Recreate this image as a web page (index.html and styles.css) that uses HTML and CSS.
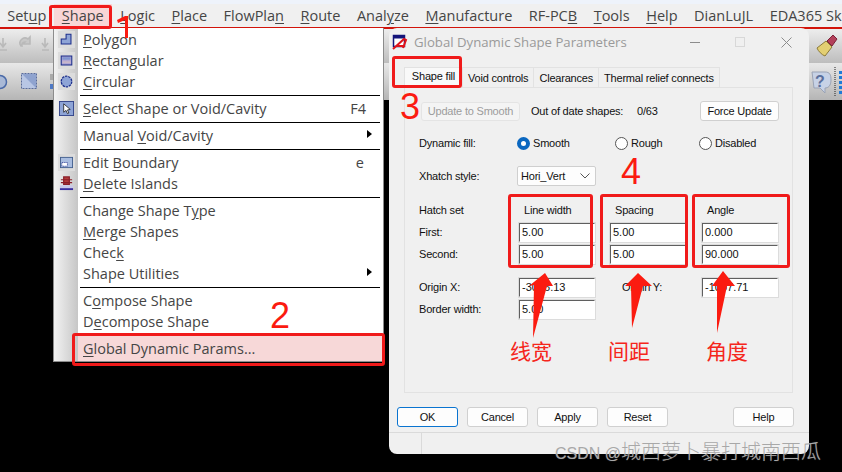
FILE: index.html
```html
<!DOCTYPE html>
<html lang="en">
<head>
<meta charset="utf-8">
<title>Global Dynamic Shape Parameters</title>
<link rel="stylesheet" href="styles.css">
</head>
<body>
<div class="screen">
  <div class="app">
    <div class="strip"></div>
    <nav class="menubar">
      <span class="mi"><span>Set<u>u</u>p</span></span>
      <span class="mi active"><span><u>S</u>hape</span></span>
      <span class="mi"><span><u>L</u>ogic</span></span>
      <span class="mi"><span><u>P</u>lace</span></span>
      <span class="mi"><span>FlowPla<u>n</u></span></span>
      <span class="mi"><span><u>R</u>oute</span></span>
      <span class="mi"><span>Anal<u>y</u>ze</span></span>
      <span class="mi"><span><u>M</u>anufacture</span></span>
      <span class="mi"><span>RF-PC<u>B</u></span></span>
      <span class="mi"><span><u>T</u>ools</span></span>
      <span class="mi"><span><u>H</u>elp</span></span>
      <span class="mi"><span>DianLuJL</span></span>
      <span class="mi"><span>EDA365 Sk</span></span>
    </nav>
    <div class="toolbar t1">
      <svg class="tool" width="54" height="34" viewBox="0 0 54 34">
        <g fill="none" stroke="#b9b9b9" stroke-width="1.6">
          <path d="M3 9v9M0 14l3 4 3-4M0 21h7"/>
          <path d="M45 9v9M42 14l3 4 3-4M42 21h7"/>
          <path d="M21 17a5 5 0 0 1 7-7l2-2v7h-7l2-2a3 3 0 0 0-3 4z" fill="#c8c8c8"/>
        </g>
      </svg>
    </div>
    <div class="toolbar t2">
      <svg class="tool" width="54" height="37" viewBox="0 0 54 37">
        <circle cx="0" cy="19" r="6.500" fill="#a9b9d6" stroke="#4a6aa8" stroke-width="1.500"/>
        <path d="M21.500 10.500h15v15h-15z" fill="#b8c6e4" stroke="#5a6c9a" stroke-dasharray="2 1"/>
        <path d="M22 11l14 14v-14z" fill="#8fa3cf"/>
        <rect x="50" y="11" width="4" height="6" fill="#aaa"/>
        <rect x="50" y="21" width="4" height="5" fill="#4f79c4"/>
      </svg>
      <svg class="tool-right" width="33" height="37" viewBox="0 0 33 37">
        <path d="M3 9h13c5 0 6 3 6 8 0 6-3 8-6 8v5l-5-5H5z" fill="#c7d2e6" stroke="#9aa3b5"/>
        <text class="help-q" x="6" y="24">?</text>
        <path d="M26 4v30" stroke="#222" stroke-width="1" stroke-dasharray="1 1"/>
        <g fill="#1f7ad8"><rect x="30" y="8" width="3" height="3"/><rect x="30" y="13" width="3" height="3"/><rect x="30" y="18" width="3" height="3"/><rect x="30" y="23" width="3" height="3"/><rect x="30" y="28" width="3" height="3"/></g>
      </svg>
    </div>
  </div>

  <div class="menu">
    <div class="item">
      <span class="ico"><svg class="gi" viewBox="0 0 16 16"><path d="M7.500 1.500h6v12h-12v-6h6z" fill="#8ea4d6" stroke="#1c2f8c" stroke-width="1.300"/></svg></span>
      <span class="lbl"><u>P</u>olygon</span>
    </div>
    <div class="item">
      <span class="ico"><svg class="gi" viewBox="0 0 16 16"><rect x="1.500" y="2.500" width="13" height="11" fill="#b0a6d4" stroke="#1c2f8c" stroke-width="1.300"/><rect x="3" y="4" width="10" height="3" fill="#7f95d0"/><rect x="3" y="9" width="10" height="2" fill="#c9b8c8"/></svg></span>
      <span class="lbl"><u>R</u>ectangular</span>
    </div>
    <div class="item">
      <span class="ico"><svg class="gi" viewBox="0 0 16 16"><circle cx="8" cy="8" r="6.500" fill="#8ea4d6" stroke="#1c2f8c" stroke-width="1.600" stroke-dasharray="3 1"/></svg></span>
      <span class="lbl"><u>C</u>ircular</span>
    </div>
    <div class="sep"></div>
    <div class="item">
      <span class="ico"><svg class="gl" viewBox="0 0 16 16"><rect x="0.500" y="0.500" width="15" height="15" fill="#8ea4d6" stroke="#34458a"/><path d="M5 3v9l2.500-2 1.500 3.500 1.500-.7L9 9.500l3-.5z" fill="#fff" stroke="#111" stroke-width=".8"/></svg></span>
      <span class="lbl"><u>S</u>elect Shape or Void/Cavity</span>
      <span class="key">F4</span>
    </div>
    <div class="sep"></div>
    <div class="item">
      <span class="ico"></span>
      <span class="lbl">Manual <u>V</u>oid/Cavity</span>
      <span class="arrow"></span>
    </div>
    <div class="sep"></div>
    <div class="item">
      <span class="ico"><svg class="gi" viewBox="0 0 14 14"><rect x="0.500" y="1.500" width="13" height="11" fill="#a9bde0" stroke="#44608f"/><rect x="2" y="7" width="6" height="4" fill="#fff" stroke="#1c2f8c" stroke-dasharray="1 1"/></svg></span>
      <span class="lbl">Edit <u>B</u>oundary</span>
      <span class="key key-e">e</span>
    </div>
    <div class="item">
      <span class="ico"><svg class="gl" viewBox="0 0 16 16"><path d="M5 1h6v8H5zM2 4h12M2 7h12" fill="#b33a3a" stroke="#8a1f2a" stroke-width="1.300"/><rect x="1" y="10" width="14" height="3" fill="#c8c8ea"/><rect x="1" y="13" width="14" height="2" fill="#3a2ea0"/></svg></span>
      <span class="lbl"><u>D</u>elete Islands</span>
    </div>
    <div class="sep"></div>
    <div class="item"><span class="ico"></span><span class="lbl">Change Shape T<u>y</u>pe</span></div>
    <div class="item"><span class="ico"></span><span class="lbl"><u>M</u>erge Shapes</span></div>
    <div class="item"><span class="ico"></span><span class="lbl">Chec<u>k</u></span></div>
    <div class="item">
      <span class="ico"></span>
      <span class="lbl">Shape Utilities</span>
      <span class="arrow"></span>
    </div>
    <div class="sep"></div>
    <div class="item"><span class="ico"></span><span class="lbl">C<u>o</u>mpose Shape</span></div>
    <div class="item"><span class="ico"></span><span class="lbl">D<u>e</u>compose Shape</span></div>
    <div class="sep sep-last"></div>
    <div class="item hot"><span class="ico"></span><span class="lbl"><u>G</u>lobal Dynamic Params...</span></div>
  </div>

  <section class="dialog">
    <header class="titlebar">
      <svg class="appicon" width="16" height="16" viewBox="0 0 16 16">
        <rect x="1.500" y="1.500" width="11" height="11" fill="#fff" stroke="#14147a" stroke-width="1.500"/>
        <rect x="1.500" y="1.500" width="11" height="3" fill="#14147a"/>
        <path d="M1 15L12 5l2 1-3 8M5 12h8" fill="none" stroke="#e0141c" stroke-width="2"/>
      </svg>
      <span class="title">Global Dynamic Shape Parameters</span>
      <span class="winbtns">
        <span class="wb-min"></span>
        <span class="wb-max"></span>
        <svg class="wb-close" width="11" height="11" viewBox="0 0 11 11"><path d="M.5.500l10 10M10.500.500l-10 10" stroke="#8c8c8c" stroke-width="1"/></svg>
      </span>
    </header>
    <div class="tabs">
      <span class="tab on">Shape fill</span>
      <span class="tab">Void controls</span>
      <span class="tab">Clearances</span>
      <span class="tab">Thermal relief connects</span>
    </div>
    <div class="panel">
      <div class="toprow">
        <span class="btn ghost">Update to Smooth</span>
        <span class="ood">Out of date shapes:</span>
        <span class="cnt">0/63</span>
        <span class="btn force">Force Update</span>
      </div>
      <div class="row fillrow">
        <span>Dynamic fill:</span>
        <span class="radios">
          <span class="radio r1"><i class="dot sel"></i>Smooth</span>
          <span class="radio r2"><i class="dot"></i>Rough</span>
          <span class="radio"><i class="dot"></i>Disabled</span>
        </span>
      </div>
      <div class="row xrow">
        <span>Xhatch style:</span>
        <span class="select">Hori_Vert<svg width="10" height="6" viewBox="0 0 10 6"><path d="M.5.500L5 5 9.500.500" fill="none" stroke="#555"/></svg></span>
      </div>
      <div class="grid hatch">
        <span>Hatch set</span><span class="h-col">Line width</span><span class="h-col">Spacing</span><span class="h-col">Angle</span>
      </div>
      <div class="grid first">
        <span>First:</span><span class="input">5.00</span><span class="input">5.00</span><span class="input">0.000</span>
      </div>
      <div class="grid second">
        <span>Second:</span><span class="input">5.00</span><span class="input">5.00</span><span class="input">90.000</span>
      </div>
      <div class="grid origin">
        <span>Origin X:</span><span class="input">-3006.13</span><span class="oy">Origin Y:</span><span class="input">-1007.71</span>
      </div>
      <div class="grid border">
        <span>Border width:</span><span class="input">5.00</span>
      </div>
    </div>
    <div class="actions">
      <span class="btn act ok">OK</span>
      <span class="btn act">Cancel</span>
      <span class="btn act">Apply</span>
      <span class="btn act">Reset</span>
      <span class="btn act help">Help</span>
    </div>
    <footer class="status"><span class="pane"></span></footer>
  </section>

  <span class="box b-shape"></span>
  <span class="box b-global"></span>
  <span class="box b-tab"></span>
  <span class="box b-lw"></span>
  <span class="box b-sp"></span>
  <span class="box b-an"></span>

  <svg class="marks" width="842" height="472" viewBox="0 0 842 472">
    <g fill="#fb1b10">
      <path d="M117 20l8-4h3v22h-3V20l-7 3z"/>
      <path d="M545 273l8 13-6 0-14 52 1-53-5 1z"/>
      <path d="M638 273l14 13-9 0-11 42-1-42-6 0z"/>
      <path d="M723 271l12 15-8 0-10 47 0-47-5 0z"/>
    </g>
  </svg>
  <span class="num n2">2</span>
  <span class="num n3">3</span>
  <span class="num n4">4</span>
  <span class="cn c1">线宽</span>
  <span class="cn c2">间距</span>
  <span class="cn c3">角度</span>
  <svg class="broom" width="26" height="26" viewBox="0 0 26 26">
    <path d="M3 15l9-7 6 6-7 9c-3-1-7-5-8-8z" fill="#e3cf72" stroke="#8b7a3a"/>
    <path d="M13 8l6-6 4 4-5 7z" fill="#b3405a" stroke="#7c2238"/>
  </svg>
  <span class="watermark">CSDN @<span class="wm-cn">城西萝卜暴打城南西瓜</span></span>
</div>
</body>
</html>
```

FILE: styles.css
```css
* { box-sizing: border-box; }
html, body { margin: 0; padding: 0; background: #000; }
.screen { position: relative; width: 842px; height: 472px; overflow: hidden; background: #000; font-family: "Liberation Sans", Arial, sans-serif; }
u { text-underline-offset: 2px; text-decoration-thickness: 1px; }

.app { display: flex; flex-direction: column; }
.strip { height: 4px; background: #eef3fb; }
.menubar { height: 23px; background: #f0f0f0; display: flex; font: 14.5px/23px "Open Sans", sans-serif; color: #454545; white-space: nowrap; }
.mi { padding: 0 8.25px; }
.menubar .mi:first-child { margin-left: -1px; margin-right: -1px; }
.mi.active { background: #f8d6d6; }
.toolbar { position: relative; }
.t1 { height: 36px; border-top: 2px solid #d2140a; background: linear-gradient(#ededed, #bdbdbd); }
.t2 { height: 37px; background: linear-gradient(#e8e8e8, #b5b5b5); }
.tool { display: block; }
.tool-right { position: absolute; right: 0; top: 0; }
.help-q { font: bold 16px "Liberation Sans", sans-serif; fill: #5a6f9c; }

.menu { position: absolute; left: 53px; top: 28px; width: 331px; height: 334px; padding: 1px 0 0; background: #fff; border: 1px solid #8c8c8c; border-top: 0; display: flex; flex-direction: column; font: 14.5px/21px "Open Sans", sans-serif; color: #454545; }
.menu::before { content: ""; position: absolute; left: 0; top: 0; bottom: 0; width: 24px; background: linear-gradient(90deg, #f2f2f2, #c6c6c6); }
.item { position: relative; height: 21px; display: flex; align-items: center; white-space: nowrap; padding-right: 14px; }
.ico { width: 29px; flex: none; display: flex; align-items: center; padding-left: 4px; }
.gi { width: 17px; height: 17px; padding: 2px; background: #dcdcdc; display: block; }
.gl { width: 15px; height: 15px; margin-left: 1px; display: block; }
.lbl { flex: 1; }
.key { margin-right: 3px; }
.key-e { margin-right: 5px; }
.arrow { width: 0; height: 0; margin-right: -3px; border-left: 5px solid #000; border-top: 4px solid transparent; border-bottom: 4px solid transparent; margin-top: -4px; }
.sep { position: relative; height: 6px; margin: 0 3px 0 26px; display: flex; align-items: center; flex: none; }
.sep::after { content: ""; display: block; height: 1px; width: 100%; background: #000; }
.sep-last { height: 4px; }
.hot { height: 27px; margin: 0 0 0 24px; background: #f7d8d8; }
.hot .ico { width: 5px; padding: 0; }

.dialog { position: absolute; left: 389px; top: 28px; width: 420px; height: 426px; background: #f0f0f0; border-radius: 8px; display: flex; flex-direction: column; font-size: 11px; letter-spacing: -.2px; color: #111; }
.titlebar { height: 28px; display: flex; align-items: center; padding: 0 17px 0 3px; flex: none; }
.appicon { margin-right: 6px; flex: none; }
.title { flex: 1; font: 13.2px "Open Sans", sans-serif; letter-spacing: 0; color: #9a9a9a; white-space: nowrap; }
.winbtns { display: flex; align-items: center; }
.wb-min { width: 10px; height: 1px; background: #8c8c8c; margin-right: 35px; }
.wb-max { width: 10px; height: 10px; border: 1px solid #d8d8d8; margin-right: 36px; }
.wb-close { display: block; }

.tabs { display: flex; height: 20px; margin: 11px 0 0 15px; flex: none; }
.tab { display: flex; align-items: center; justify-content: center; height: 20px; border: 1px solid #e2e2e2; border-bottom: 0; border-left: 0; padding: 0 5px; white-space: nowrap; }
.tab.on { width: 59px; background: #f9f9f9; border-left: 1px solid #e2e2e2; padding: 0 0 3px 0; }

.panel { height: 306px; margin: 0 16px 0 15px; border: 1px solid #e2e2e2; padding: 13px 0 0 14px; flex: none; }
.toprow { display: flex; align-items: center; height: 20px; margin-left: 2px; }
.btn { display: flex; align-items: center; justify-content: center; background: #fdfdfd; border: 1px solid #d0d0d0; border-radius: 3px; white-space: nowrap; }
.ghost { width: 99px; height: 19px; color: #9c9c9c; background: #f4f4f4; border-color: #e4e4e4; }
.ood { margin-left: 11px; width: 106px; }
.cnt { width: 63px; }
.force { width: 79px; height: 20px; }

.row { display: flex; align-items: center; }
.row > span:first-child { width: 98px; flex: none; }
.fillrow { height: 16px; margin-top: 14px; }
.radios { display: flex; }
.radio { display: flex; align-items: center; }
.r1 { width: 98px; }
.r2 { width: 84px; }
.dot { width: 13px; height: 13px; border: 1px solid #555; border-radius: 50%; background: #fff; margin-right: 3px; flex: none; }
.dot.sel { border: 4px solid #0a67c0; }
.xrow { height: 20px; margin-top: 15px; }
.select { width: 79px; height: 20px; border: 1px solid #cfcfcf; border-radius: 2px; background: #fdfdfd; padding: 0 5px 0 3px; display: flex; align-items: center; justify-content: space-between; }

.grid { display: grid; grid-template-columns: 100px 91px 92px 76px; align-items: center; }
.hatch { height: 16px; margin-top: 16px; }
.h-col { padding-left: 5px; }
.first { height: 20px; margin-top: 4px; }
.second { height: 20px; margin-top: 2px; }
.origin { height: 20px; margin-top: 13px; }
.border { height: 20px; margin-top: 2px; }
.input { width: 76px; height: 19px; line-height: 17px; padding-left: 2px; background: #fff; border: 1px solid; border-color: #5f5f5f #fff #fff #5f5f5f; box-shadow: 0 0 0 1px #dcdcdc; font-size: 11px; letter-spacing: 0; white-space: nowrap; }
.oy { padding-left: 12px; }

.actions { display: flex; height: 20px; margin: 14px 15px 0 8px; gap: 9px; flex: none; }
.act { width: 61px; height: 20px; }
.ok { border: 1px solid #0a74d0; }
.help { margin-left: auto; }
.status { flex: 1; margin-top: 5px; border-top: 1px solid #dadada; display: flex; }
.pane { width: 33px; border-right: 1px solid #dadada; }

.box { position: absolute; border: 3px solid #f01a1a; border-radius: 3px; }
.b-shape { left: 49px; top: 5px; width: 63px; height: 24px; }
.b-global { left: 72px; top: 333px; width: 313px; height: 33px; }
.b-tab { left: 392px; top: 56px; width: 70px; height: 32px; }
.b-lw { left: 508px; top: 194px; width: 85px; height: 74px; }
.b-sp { left: 600px; top: 194px; width: 88px; height: 74px; }
.b-an { left: 692px; top: 194px; width: 98px; height: 74px; }

.marks { position: absolute; left: 0; top: 0; }
.num { position: absolute; font: 36px/40px "Liberation Sans", sans-serif; color: #fb1b10; }
.n2 { left: 270px; top: 296px; }
.n3 { left: 400px; top: 87px; }
.n4 { left: 621px; top: 152px; }
.cn { position: absolute; top: 337px; font: 21px/26px "Noto Sans CJK SC", sans-serif; color: #f5261c; }
.c1 { left: 510px; }
.c2 { left: 608px; }
.c3 { left: 706px; }
.broom { position: absolute; left: 814px; top: 33px; }
.watermark { position: absolute; left: 555px; top: 439px; font: 16px/24px "Liberation Sans", sans-serif; color: #a8a8a8; white-space: nowrap; text-shadow: 0 0 1px rgba(255,255,255,.4); }
.wm-cn { font: 300 20px/24px "Noto Sans CJK SC", sans-serif; }
```
